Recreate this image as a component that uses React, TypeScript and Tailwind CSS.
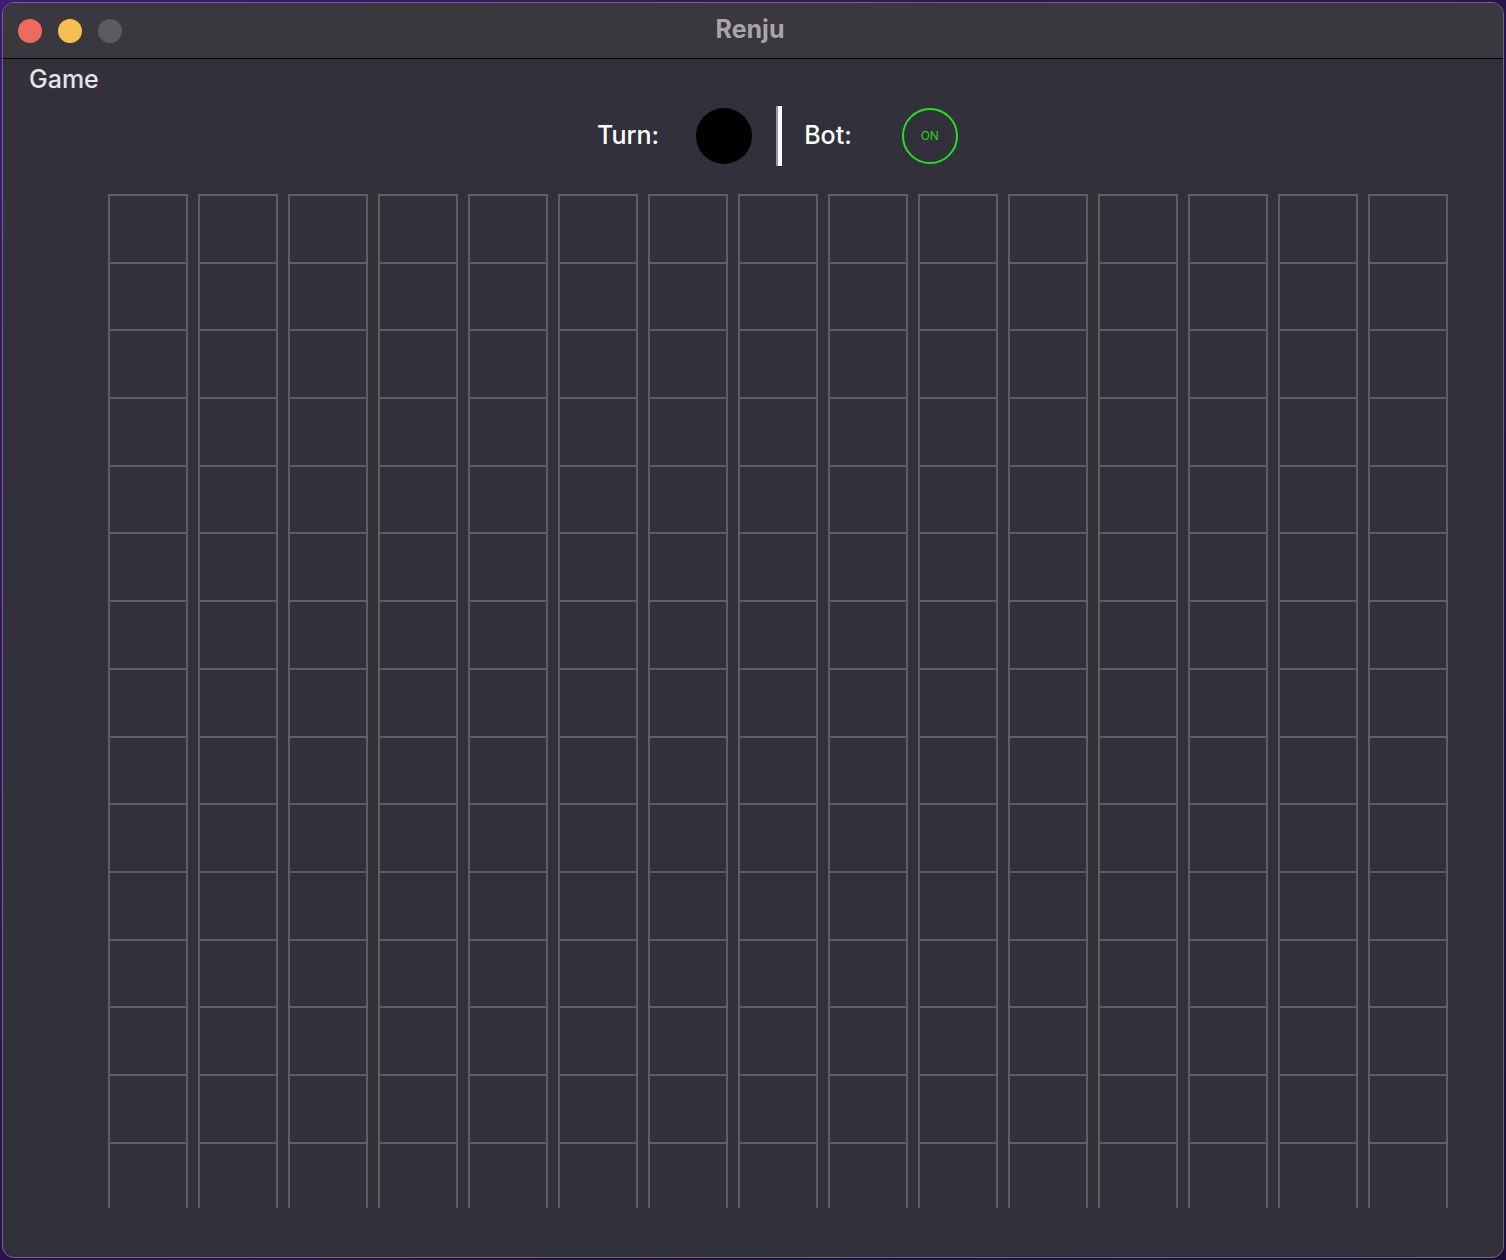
import React from 'react';

const COLS = 15;
const ROWS = 15;

function Column() {
  return (
    <div className="w-[80px] h-[1014px] shrink-0 border-x-2 border-[#5e5e61] overflow-hidden flex flex-col">
      {Array.from({ length: ROWS }).map((_, r) => (
        <div key={r} className="h-[67.7px] shrink-0 border-t-2 border-[#5e5e61]" />
      ))}
    </div>
  );
}

export default function App() {
  return (
    <div
      className="w-[1506px] h-[1260px] p-[2px] bg-gradient-to-br from-[#3a1a7a] via-[#2a1250] to-[#1c0d3c]"
      style={{ fontFamily: 'Inter, "Noto Sans", sans-serif' }}
    >
      <div className="h-full rounded-[12px] border border-[#6d6b72] bg-[#32303b] overflow-hidden flex flex-col">
        {/* title bar */}
        <div className="h-[56px] shrink-0 bg-[#3a373e] border-b border-black flex items-center relative">
          <div className="flex items-center gap-[16px] pl-[15px]">
            <span className="w-[24px] h-[24px] rounded-full bg-[#ed6a5e]" />
            <span className="w-[24px] h-[24px] rounded-full bg-[#f5c04f]" />
            <span className="w-[24px] h-[24px] rounded-full bg-[#5d5b61]" />
          </div>
          <div className="absolute inset-0 flex items-center justify-center pb-[2px] pr-[6px] text-[25px] font-bold text-[#a8a4ac]">
            Renju
          </div>
        </div>

        {/* menu */}
        <div className="pl-[26px] pt-[4px] leading-[32px] text-[25px] font-medium text-[#e4e3e6]">Game</div>

        {/* header */}
        <div className="mt-[11px] h-[60px] flex items-center pl-[594px] text-[25px] font-medium text-white">
          <span>Turn:</span>
          <span className="ml-[37px] w-[56px] h-[56px] rounded-full bg-black" />
          <span className="ml-[24px] w-[6px] h-[60px] border-l-2 border-[#9a99a0] bg-white" />
          <span className="ml-[22px]">Bot:</span>
          <span className="ml-[50px] w-[56px] h-[56px] rounded-full border-2 border-[#22e31a] flex items-center justify-center text-[12px] font-normal text-[#22d41b]">
            ON
          </span>
        </div>

        {/* board */}
        <div className="mt-[28px] pl-[105px] flex gap-[10px]">
          {Array.from({ length: COLS }).map((_, c) => (
            <Column key={c} />
          ))}
        </div>
      </div>
    </div>
  );
}
